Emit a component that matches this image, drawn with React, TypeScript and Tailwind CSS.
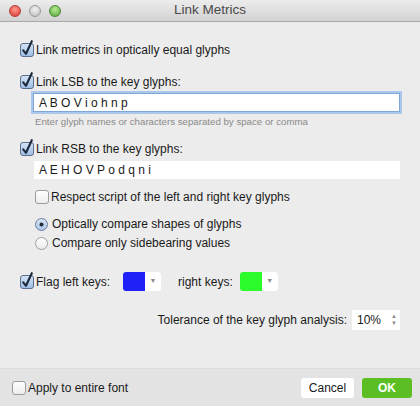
import React from "react";

const font = { fontFamily: '"Liberation Sans", Arial, sans-serif' };

function Check({ checked = false }: { checked?: boolean }) {
  return (
    <svg width="14" height="14" viewBox="0 0 14 14" className="shrink-0 overflow-visible">
      <defs>
        <linearGradient id={checked ? "cbOn" : "cbOff"} x1="0" y1="0" x2="0" y2="1">
          <stop offset="0" stopColor={checked ? "#d6e4f5" : "#ffffff"} />
          <stop offset="1" stopColor={checked ? "#9fbde4" : "#ececec"} />
        </linearGradient>
      </defs>
      <rect x="0.5" y="0.5" width="13" height="13" rx="2.5" fill={`url(#${checked ? "cbOn" : "cbOff"})`} stroke={checked ? "#5a6f8c" : "#9b9b9b"} />
      {checked && (
        <path d="M3.2 7.4 L6 10.8 L11.8 -1.8" fill="none" stroke="#1c2a3d" strokeWidth="2.1" strokeLinecap="round" strokeLinejoin="round" />
      )}
    </svg>
  );
}

function Radio({ on = false }: { on?: boolean }) {
  return (
    <svg width="13" height="13" viewBox="0 0 13 13" className="shrink-0">
      <defs>
        <linearGradient id={on ? "rOn" : "rOff"} x1="0" y1="0" x2="0" y2="1">
          <stop offset="0" stopColor={on ? "#dbe7f6" : "#ffffff"} />
          <stop offset="1" stopColor={on ? "#a9c4e6" : "#e9e9e9"} />
        </linearGradient>
      </defs>
      <circle cx="6.5" cy="6.5" r="6" fill={`url(#${on ? "rOn" : "rOff"})`} stroke={on ? "#6b7f9a" : "#9d9d9d"} />
      {on && <circle cx="6.5" cy="6.5" r="2" fill="#1f2b3b" />}
    </svg>
  );
}

function Well({ color }: { color: string }) {
  return (
    <div className="flex h-[19px] w-[38px] overflow-hidden rounded-[3px] bg-white">
      <div className="h-full w-[22px]" style={{ backgroundColor: color }} />
      <div className="flex flex-1 items-center justify-center text-[7px] text-[#8a8a8a]">▼</div>
    </div>
  );
}

function Light({ from, to, ring }: { from: string; to: string; ring: string }) {
  return (
    <div
      className="h-[12px] w-[12px] rounded-full border"
      style={{ background: `radial-gradient(circle at 50% 35%, ${from}, ${to})`, borderColor: ring }}
    />
  );
}

export default function App() {
  return (
    <div className="flex h-[406px] w-[420px] flex-col bg-[#ececec] text-[12px] text-[#1a1a1a]" style={font}>
      {/* title bar */}
      <div className="relative flex h-[22px] items-center border-b border-[#a8a8a8] bg-gradient-to-b from-[#ececec] to-[#d2d2d2]">
        <div className="flex gap-[8px] pl-[9px]">
          <Light from="#ff9a90" to="#d9322a" ring="#b0413a" />
          <Light from="#f2f2f2" to="#b9b9b9" ring="#9a9a9a" />
          <Light from="#b9ec92" to="#4fa233" ring="#4f8a3a" />
        </div>
        <div className="absolute inset-0 flex items-center justify-center text-[13.5px] text-[#4a4a4a]">Link Metrics</div>
      </div>

      {/* body */}
      <div className="flex flex-1 flex-col pl-[20px] pr-[20px]">
        <div className="mt-[20px] flex h-[16px] items-center gap-[2px]">
          <Check checked />
          <span>Link metrics in optically equal glyphs</span>
        </div>

        <div className="mt-[16px] flex h-[16px] items-center gap-[2px]">
          <Check checked />
          <span>Link LSB to the key glyphs:</span>
        </div>

        <div className="ml-[13px] mt-[3px] flex h-[19px] items-center border border-[#7ea6d6] bg-white pl-[5px] text-[12px] shadow-[0_0_0_2px_#a9c8ec]">
          A B O V i o h n p
        </div>

        <div className="ml-[15px] mt-[4px] h-[12px] text-[9.7px] leading-[12px] text-[#8a8a8a]">
          Enter glyph names or characters separated by space or comma
        </div>

        <div className="mt-[13px] flex h-[16px] items-center gap-[2px]">
          <Check checked />
          <span>Link RSB to the key glyphs:</span>
        </div>

        <div className="ml-[14px] mt-[4px] flex h-[18px] items-center bg-white pl-[5px] text-[12px]">
          A E H O V P o d q n i
        </div>

        <div className="ml-[15px] mt-[10px] flex h-[16px] items-center gap-[2px]">
          <Check />
          <span>Respect script of the left and right key glyphs</span>
        </div>

        <div className="ml-[15px] mt-[11px] flex h-[16px] items-center gap-[4px]">
          <Radio on />
          <span>Optically compare shapes of glyphs</span>
        </div>

        <div className="ml-[15px] mt-[3px] flex h-[16px] items-center gap-[4px]">
          <Radio />
          <span>Compare only sidebearing values</span>
        </div>

        <div className="mt-[21px] flex h-[19px] items-center">
          <Check checked />
          <span className="ml-[2px]">Flag left keys:</span>
          <div className="ml-[13px]">
            <Well color="#2020f8" />
          </div>
          <span className="ml-[17px]">right keys:</span>
          <div className="ml-[7px]">
            <Well color="#2cfb2c" />
          </div>
        </div>

        <div className="mt-[19px] flex h-[20px] items-center justify-end">
          <span>Tolerance of the key glyph analysis:</span>
          <div className="ml-[5px] flex h-[20px] w-[48px] items-center justify-between bg-white pl-[5px] pr-[3px]">
            <span>10%</span>
            <div className="flex flex-col text-[6px] leading-[7px] text-[#8c8c8c]">
              <span>▲</span>
              <span>▼</span>
            </div>
          </div>
        </div>
      </div>

      {/* bottom bar */}
      <div className="flex h-[38px] items-center border-t border-[#dcdcdc] bg-[#e3e3e3] pl-[12px] pr-[8px]">
        <Check />
        <span className="ml-[2px]">Apply to entire font</span>
        <div className="ml-auto flex gap-[8px]">
          <button className="h-[20px] w-[53px] rounded-[3px] bg-white text-[12px] text-[#1a1a1a]">Cancel</button>
          <button className="h-[20px] w-[50px] rounded-[3px] bg-[#5bbf23] text-[12px] font-bold text-white">OK</button>
        </div>
      </div>
    </div>
  );
}
